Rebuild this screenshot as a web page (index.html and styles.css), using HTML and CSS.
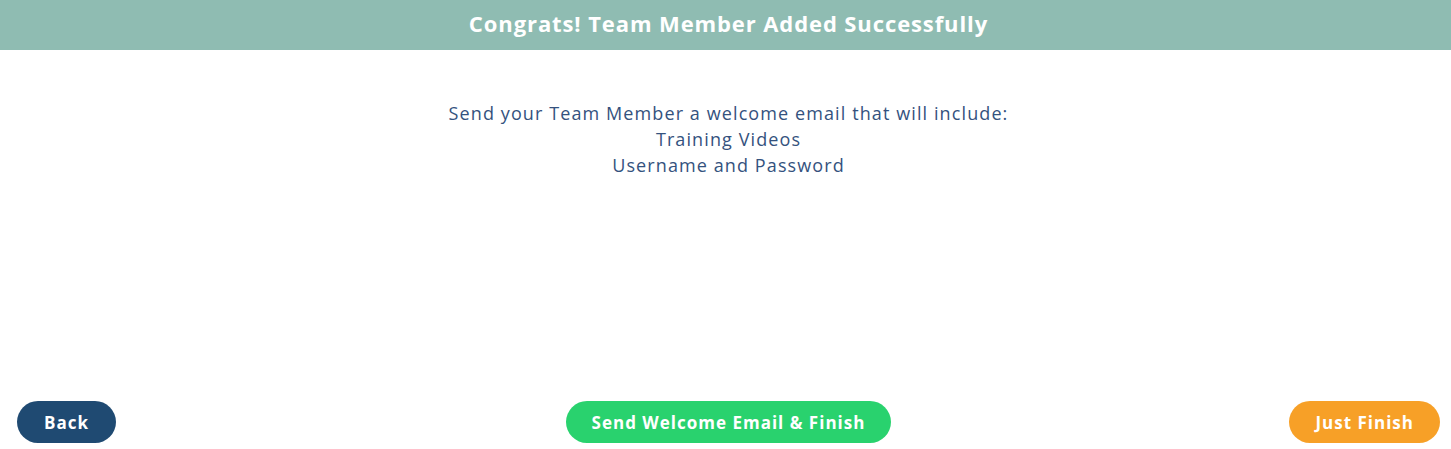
FILE: index.html
```html
<!DOCTYPE html>
<html lang="en">
<head>
    <meta charset="UTF-8">
    <meta name="viewport" content="width=device-width, initial-scale=1.0">
    <title>Team Member Added</title>
    <link rel="stylesheet" href="styles.css">
</head>
<body>
    <div class="success-page">
        <div class="success-header">
            <h1>Congrats! Team Member Added Successfully</h1>
        </div>
        <div class="success-body">
            <p>Send your Team Member a welcome email that will include:</p>
            <p>Training Videos</p>
            <p>Username and Password</p>
        </div>
        <div class="actions">
            <button class="btn btn-back">Back</button>
            <button class="btn btn-send">Send Welcome Email &amp; Finish</button>
            <button class="btn btn-finish">Just Finish</button>
        </div>
    </div>
</body>
</html>
```

FILE: styles.css
```css
body {
    font-family: 'Open Sans', 'Liberation Sans', sans-serif;
    background: #ffffff;
    margin: 0;
    padding: 0;
}
.success-page {
    display: flex;
    flex-direction: column;
    height: 449px;
}
.success-header {
    background-color: #8fbcb2;
    height: 50px;
    box-sizing: border-box;
    display: flex;
    align-items: center;
    justify-content: center;
    padding: 0 0 4px 6px;
}
.success-header h1 {
    margin: 0;
    font-size: 22px;
    font-weight: 700;
    letter-spacing: 0.9px;
    color: #ffffff;
}
.success-body {
    text-align: center;
    padding-top: 50px;
    padding-left: 6px;
    flex: 1;
}
.success-body p {
    margin: 0;
    font-size: 18px;
    line-height: 26px;
    letter-spacing: 1.1px;
    color: #34527e;
}
.actions {
    display: grid;
    grid-template-columns: 1fr auto 1fr;
    align-items: center;
    padding: 0 11px 6px 17px;
}
.btn {
    border: none;
    height: 42px;
    border-radius: 21px;
    padding: 0 26px;
    font-family: inherit;
    font-size: 17px;
    font-weight: 700;
    letter-spacing: 1px;
    color: #ffffff;
    cursor: pointer;
}
.btn-back {
    justify-self: start;
    padding: 0 27px;
    background-color: #1f4a72;
}
.btn-send {
    background-color: #29d26e;
}
.btn-finish {
    justify-self: end;
    background-color: #f7a027;
}
```
